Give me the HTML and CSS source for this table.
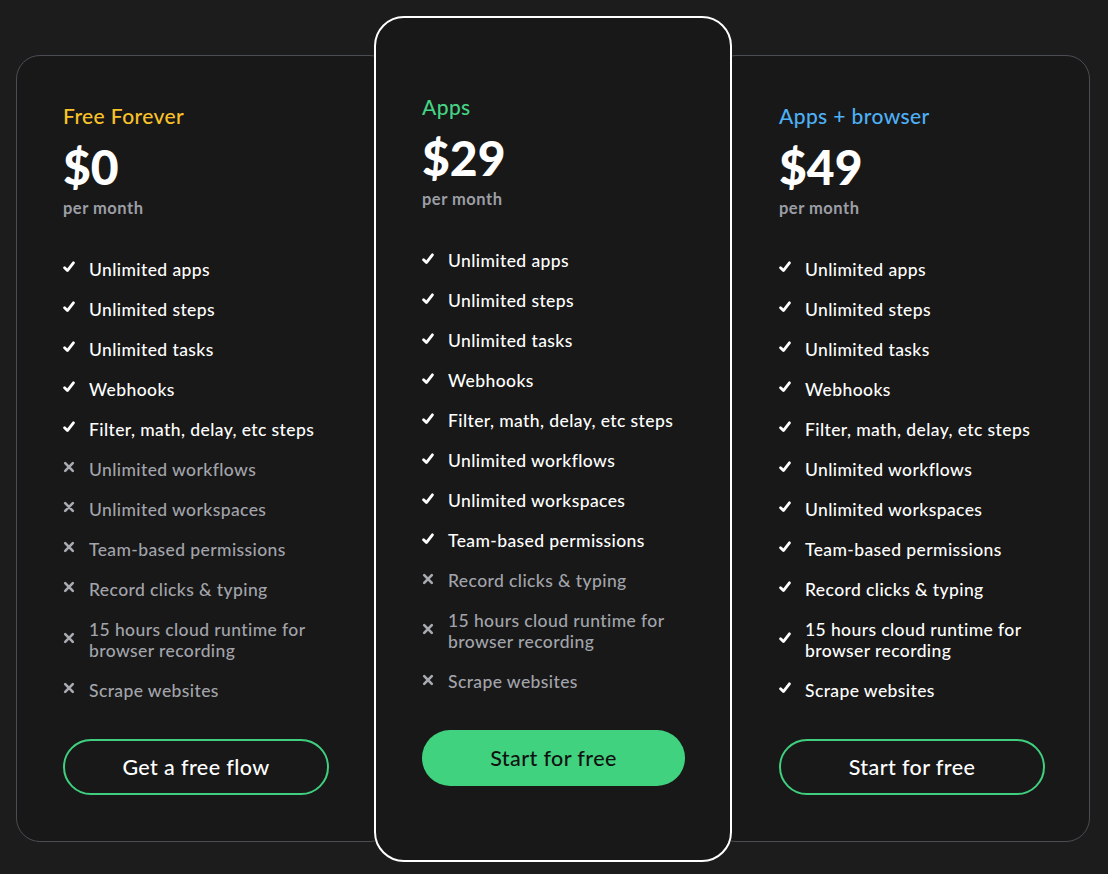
FILE: index.html
```html
<!DOCTYPE html>
<html lang="en">
<head>
<meta charset="utf-8">
<title>Pricing</title>
<link rel="stylesheet" href="styles.css">
</head>
<body>
<main class="plans">
  <section class="card card-side card-left">
    <h2 class="plan-name plan-yellow">Free Forever</h2>
    <div class="price">$0</div>
    <div class="period">per month</div>
    <ul class="features">
      <li class="feat yes"><svg class="ic" viewBox="0 0 12 12"><path d="M1.6 6.8 L4.4 9.6 L10.4 1.8"/></svg><span>Unlimited apps</span></li>
      <li class="feat yes"><svg class="ic" viewBox="0 0 12 12"><path d="M1.6 6.8 L4.4 9.6 L10.4 1.8"/></svg><span>Unlimited steps</span></li>
      <li class="feat yes"><svg class="ic" viewBox="0 0 12 12"><path d="M1.6 6.8 L4.4 9.6 L10.4 1.8"/></svg><span>Unlimited tasks</span></li>
      <li class="feat yes"><svg class="ic" viewBox="0 0 12 12"><path d="M1.6 6.8 L4.4 9.6 L10.4 1.8"/></svg><span>Webhooks</span></li>
      <li class="feat yes"><svg class="ic" viewBox="0 0 12 12"><path d="M1.6 6.8 L4.4 9.6 L10.4 1.8"/></svg><span>Filter, math, delay, etc steps</span></li>
      <li class="feat no"><svg class="ic" viewBox="0 0 12 12"><path d="M2.2 2.2 L9.8 9.8 M9.8 2.2 L2.2 9.8"/></svg><span>Unlimited workflows</span></li>
      <li class="feat no"><svg class="ic" viewBox="0 0 12 12"><path d="M2.2 2.2 L9.8 9.8 M9.8 2.2 L2.2 9.8"/></svg><span>Unlimited workspaces</span></li>
      <li class="feat no"><svg class="ic" viewBox="0 0 12 12"><path d="M2.2 2.2 L9.8 9.8 M9.8 2.2 L2.2 9.8"/></svg><span>Team-based permissions</span></li>
      <li class="feat no"><svg class="ic" viewBox="0 0 12 12"><path d="M2.2 2.2 L9.8 9.8 M9.8 2.2 L2.2 9.8"/></svg><span>Record clicks &amp; typing</span></li>
      <li class="feat no"><svg class="ic" viewBox="0 0 12 12"><path d="M2.2 2.2 L9.8 9.8 M9.8 2.2 L2.2 9.8"/></svg><span>15 hours cloud runtime for browser recording</span></li>
      <li class="feat no"><svg class="ic" viewBox="0 0 12 12"><path d="M2.2 2.2 L9.8 9.8 M9.8 2.2 L2.2 9.8"/></svg><span>Scrape websites</span></li>
    </ul>
    <a class="btn btn-outline" href="#">Get a free flow</a>
  </section>

  <section class="card card-main">
    <h2 class="plan-name plan-green">Apps</h2>
    <div class="price">$29</div>
    <div class="period">per month</div>
    <ul class="features">
      <li class="feat yes"><svg class="ic" viewBox="0 0 12 12"><path d="M1.6 6.8 L4.4 9.6 L10.4 1.8"/></svg><span>Unlimited apps</span></li>
      <li class="feat yes"><svg class="ic" viewBox="0 0 12 12"><path d="M1.6 6.8 L4.4 9.6 L10.4 1.8"/></svg><span>Unlimited steps</span></li>
      <li class="feat yes"><svg class="ic" viewBox="0 0 12 12"><path d="M1.6 6.8 L4.4 9.6 L10.4 1.8"/></svg><span>Unlimited tasks</span></li>
      <li class="feat yes"><svg class="ic" viewBox="0 0 12 12"><path d="M1.6 6.8 L4.4 9.6 L10.4 1.8"/></svg><span>Webhooks</span></li>
      <li class="feat yes"><svg class="ic" viewBox="0 0 12 12"><path d="M1.6 6.8 L4.4 9.6 L10.4 1.8"/></svg><span>Filter, math, delay, etc steps</span></li>
      <li class="feat yes"><svg class="ic" viewBox="0 0 12 12"><path d="M1.6 6.8 L4.4 9.6 L10.4 1.8"/></svg><span>Unlimited workflows</span></li>
      <li class="feat yes"><svg class="ic" viewBox="0 0 12 12"><path d="M1.6 6.8 L4.4 9.6 L10.4 1.8"/></svg><span>Unlimited workspaces</span></li>
      <li class="feat yes"><svg class="ic" viewBox="0 0 12 12"><path d="M1.6 6.8 L4.4 9.6 L10.4 1.8"/></svg><span>Team-based permissions</span></li>
      <li class="feat no"><svg class="ic" viewBox="0 0 12 12"><path d="M2.2 2.2 L9.8 9.8 M9.8 2.2 L2.2 9.8"/></svg><span>Record clicks &amp; typing</span></li>
      <li class="feat no"><svg class="ic" viewBox="0 0 12 12"><path d="M2.2 2.2 L9.8 9.8 M9.8 2.2 L2.2 9.8"/></svg><span>15 hours cloud runtime for browser recording</span></li>
      <li class="feat no"><svg class="ic" viewBox="0 0 12 12"><path d="M2.2 2.2 L9.8 9.8 M9.8 2.2 L2.2 9.8"/></svg><span>Scrape websites</span></li>
    </ul>
    <a class="btn btn-fill" href="#">Start for free</a>
  </section>

  <section class="card card-side card-right">
    <h2 class="plan-name plan-blue">Apps + browser</h2>
    <div class="price">$49</div>
    <div class="period">per month</div>
    <ul class="features">
      <li class="feat yes"><svg class="ic" viewBox="0 0 12 12"><path d="M1.6 6.8 L4.4 9.6 L10.4 1.8"/></svg><span>Unlimited apps</span></li>
      <li class="feat yes"><svg class="ic" viewBox="0 0 12 12"><path d="M1.6 6.8 L4.4 9.6 L10.4 1.8"/></svg><span>Unlimited steps</span></li>
      <li class="feat yes"><svg class="ic" viewBox="0 0 12 12"><path d="M1.6 6.8 L4.4 9.6 L10.4 1.8"/></svg><span>Unlimited tasks</span></li>
      <li class="feat yes"><svg class="ic" viewBox="0 0 12 12"><path d="M1.6 6.8 L4.4 9.6 L10.4 1.8"/></svg><span>Webhooks</span></li>
      <li class="feat yes"><svg class="ic" viewBox="0 0 12 12"><path d="M1.6 6.8 L4.4 9.6 L10.4 1.8"/></svg><span>Filter, math, delay, etc steps</span></li>
      <li class="feat yes"><svg class="ic" viewBox="0 0 12 12"><path d="M1.6 6.8 L4.4 9.6 L10.4 1.8"/></svg><span>Unlimited workflows</span></li>
      <li class="feat yes"><svg class="ic" viewBox="0 0 12 12"><path d="M1.6 6.8 L4.4 9.6 L10.4 1.8"/></svg><span>Unlimited workspaces</span></li>
      <li class="feat yes"><svg class="ic" viewBox="0 0 12 12"><path d="M1.6 6.8 L4.4 9.6 L10.4 1.8"/></svg><span>Team-based permissions</span></li>
      <li class="feat yes"><svg class="ic" viewBox="0 0 12 12"><path d="M1.6 6.8 L4.4 9.6 L10.4 1.8"/></svg><span>Record clicks &amp; typing</span></li>
      <li class="feat yes"><svg class="ic" viewBox="0 0 12 12"><path d="M1.6 6.8 L4.4 9.6 L10.4 1.8"/></svg><span>15 hours cloud runtime for browser recording</span></li>
      <li class="feat yes"><svg class="ic" viewBox="0 0 12 12"><path d="M1.6 6.8 L4.4 9.6 L10.4 1.8"/></svg><span>Scrape websites</span></li>
    </ul>
    <a class="btn btn-outline" href="#">Start for free</a>
  </section>
</main>
</body>
</html>
```

FILE: styles.css
```css
* { box-sizing: border-box; }

html, body {
  margin: 0;
  padding: 0;
  background: #1c1c1c;
}

body {
  font-family: Lato, "Noto Sans", sans-serif;
  color: #ffffff;
}

.plans {
  display: grid;
  grid-template-columns: 358px 358px 358px;
  align-items: start;
  padding: 16px 0 12px 16px;
}

.card {
  background: #181818;
  display: flex;
  flex-direction: column;
}

.card-side {
  margin-top: 39px;
  height: 787px;
  border: 1.5px solid #4a4d53;
  border-radius: 24px;
  padding: 46.5px 44px 46px 46px;
}

.card-left {
  margin-right: -20px;
  padding-right: 64px;
}

.card-right {
  margin-left: -20px;
  padding-left: 66px;
}

.card-main {
  position: relative;
  z-index: 2;
  height: 846px;
  border: 2px solid #ffffff;
  border-radius: 30px;
  padding: 76px 45px 74px 46px;
}

.plan-name {
  margin: 0;
  font-size: 21px;
  line-height: 26px;
  font-weight: 500;
  letter-spacing: 0.4px;
}

.plan-yellow { color: #f9c22a; }
.plan-green { color: #44d483; }
.plan-blue { color: #4eb0f5; }

.price {
  margin-top: 12px;
  font-size: 48px;
  line-height: 52px;
  font-weight: 900;
  letter-spacing: 0;
}

.period {
  margin-top: 5px;
  font-size: 16.5px;
  line-height: 20px;
  font-weight: 700;
  letter-spacing: 0.5px;
  color: #9c9ea5;
}

.features {
  list-style: none;
  margin: 41px 0 0 0;
  padding: 0;
  display: flex;
  flex-direction: column;
  gap: 19px;
}

.feat {
  display: flex;
  align-items: center;
  gap: 14px;
  font-size: 17.5px;
  line-height: 21px;
  font-weight: 500;
  letter-spacing: 0.4px;
}

.feat span { flex: 1; }

.ic {
  width: 12px;
  height: 12px;
  flex: none;
  margin-top: -4px;
  fill: none;
  stroke-linecap: round;
  stroke-linejoin: round;
}

.yes { color: #ffffff; }
.yes .ic { stroke: #ffffff; stroke-width: 2.8; }

.no { color: #a2a4ab; }
.no .ic { stroke: #a9abb2; stroke-width: 2.6; }

.btn {
  margin-top: 38px;
  display: flex;
  align-items: center;
  justify-content: center;
  height: 56px;
  border-radius: 28px;
  font-size: 21.5px;
  font-weight: 500;
  letter-spacing: 0.4px;
  text-decoration: none;
}

.btn-outline {
  border: 2px solid #3fcf7f;
  color: #ffffff;
}

.btn-fill {
  background: #40d27f;
  color: #111111;
}
```
